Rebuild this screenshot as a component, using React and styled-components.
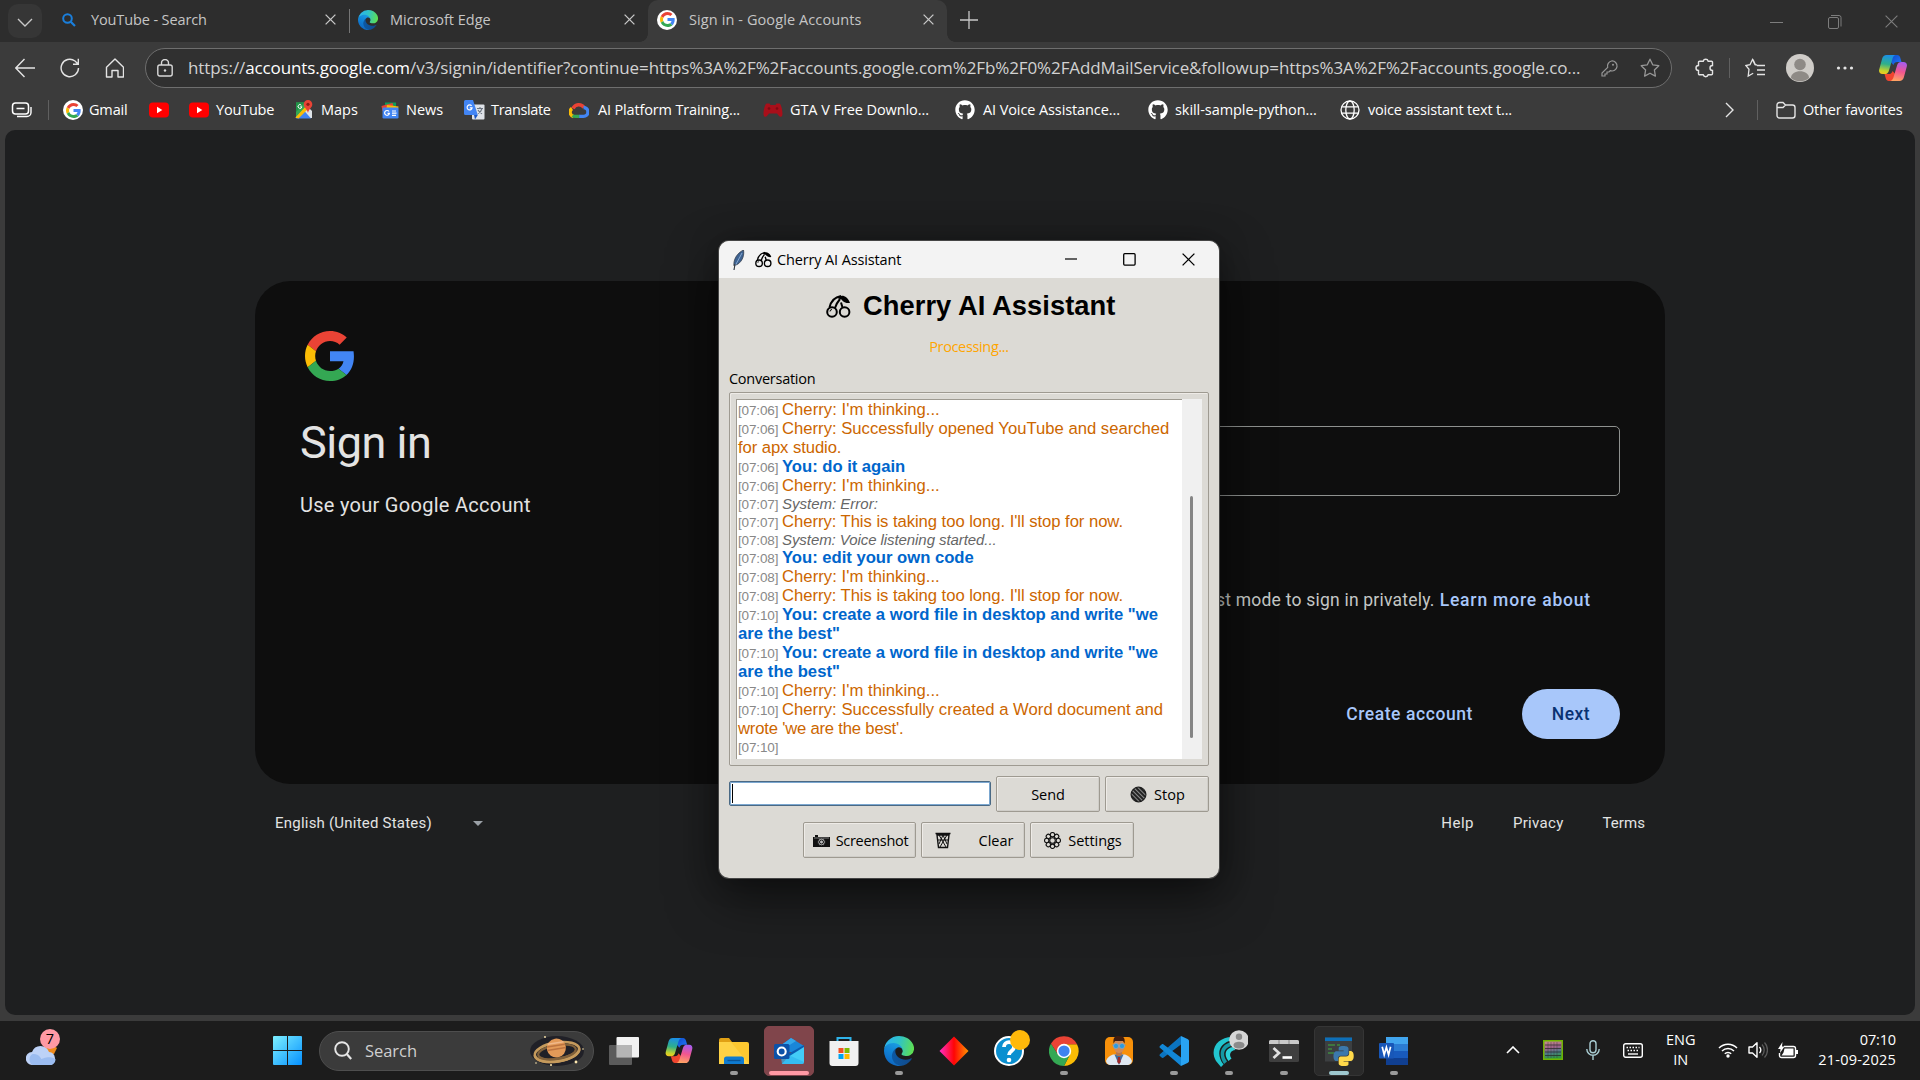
import React from "react";
import styled, { createGlobalStyle, css } from "styled-components";
import { FaGithub } from "react-icons/fa";

const SEGOE = `"Open Sans", "Noto Sans", sans-serif`;
const GOOGLE = `Roboto, "Open Sans", sans-serif`;
const ARIAL = `"Liberation Sans", Arial, sans-serif`;

const Global = createGlobalStyle`
  * { box-sizing: border-box; }
  html, body { margin: 0; padding: 0; background: #1c1c1c; overflow: hidden; }
  svg { display: block; flex: none; }
`;

const Desktop = styled.div`
  position: relative;
  width: 1920px;
  height: 1080px;
  display: flex;
  flex-direction: column;
  overflow: hidden;
  font-family: ${SEGOE};
  background: #3b3b3b;
`;

const TextSpan = styled.span`
  white-space: pre;
  font-size: ${(p) => p.$size || 14.5}px;
  letter-spacing: ${(p) => p.$ls || 0}px;
  color: ${(p) => p.$color || "inherit"};
  font-weight: ${(p) => p.$weight || "inherit"};
  line-height: 20px;
`;
const T = ({ s, ls, c, wt, children }) => (
  <TextSpan $size={s} $ls={ls} $color={c} $weight={wt}>{children}</TextSpan>
);

/* ---------- icons ---------- */
const I = ({ w = 20, h, vb, children }) => (
  <svg width={w} height={h || w} viewBox={vb || `0 0 ${w} ${h || w}`} fill="none">{children}</svg>
);
const GLogo = ({ size }) => (
  <I w={size} vb="0 0 48 48">
    <path fill="#EA4335" d="M24 9.5c3.54 0 6.71 1.22 9.21 3.6l6.85-6.85C35.9 2.38 30.47 0 24 0 14.62 0 6.51 5.38 2.56 13.22l7.98 6.19C12.43 13.72 17.74 9.5 24 9.5z" />
    <path fill="#4285F4" d="M46.98 24.55c0-1.57-.15-3.09-.38-5.2H24v9.67h12.94c-.58 2.96-2.26 5.48-4.78 7.18l7.73 6c4.51-4.18 7.09-10.36 7.09-17.65z" />
    <path fill="#FBBC05" d="M10.53 28.59c-.48-1.45-.76-2.99-.76-4.59s.27-3.14.76-4.59l-7.98-6.19C.92 16.46 0 20.12 0 24c0 3.88.92 7.54 2.56 10.78l7.97-6.19z" />
    <path fill="#34A853" d="M24 48c6.48 0 11.93-2.13 15.89-5.81l-7.73-6c-2.15 1.45-4.92 2.3-8.16 2.3-6.26 0-11.57-4.22-13.47-9.91l-7.98 6.19C6.51 42.62 14.62 48 24 48z" />
  </I>
);
const GBadge = styled.span`
  width: 20px; height: 20px; border-radius: 50%; background: #fff; flex: none;
  display: flex; align-items: center; justify-content: center;
`;
const GoogleFav = () => <GBadge><GLogo size={15} /></GBadge>;
const EdgeIcon = ({ size, id }) => (
  <I w={size} vb="0 0 256 256">
    <defs>
      <linearGradient id={id + "a"} x1="60" y1="180" x2="235" y2="180" gradientUnits="userSpaceOnUse"><stop stopColor="#0c59a4" /><stop offset="1" stopColor="#114a8b" /></linearGradient>
      <linearGradient id={id + "b"} x1="140" y1="70" x2="60" y2="230" gradientUnits="userSpaceOnUse"><stop stopColor="#1b9de2" /><stop offset=".5" stopColor="#1183d6" /><stop offset="1" stopColor="#0f6bc4" /></linearGradient>
      <linearGradient id={id + "c"} x1="10" y1="60" x2="250" y2="120" gradientUnits="userSpaceOnUse"><stop stopColor="#2bb3ee" /><stop offset=".45" stopColor="#2fc2c9" /><stop offset="1" stopColor="#5fe04f" /></linearGradient>
    </defs>
    <path fill={`url(#${id}a)`} d="M231 190.5c-3.4 1.8-6.9 3.4-10.5 4.7a101.5 101.5 0 0 1-35.9 6.5c-47.3 0-88.5-32.5-88.5-74.3a31.5 31.5 0 0 1 16.4-27.3c-42.8 1.8-53.8 46.4-53.8 72.5 0 73.9 68.1 81.4 82.8 81.4 7.9 0 19.8-2.3 27-4.6l1.3-.4a128.3 128.3 0 0 0 66.6-52.8 4 4 0 0 0-5.4-5.7z" />
    <path fill={`url(#${id}b)`} d="M105.7 241.4a79.2 79.2 0 0 1-22.7-21.3 80.7 80.7 0 0 1 29.5-120c3.2-1.5 8.5-4.1 15.6-4a32.4 32.4 0 0 1 25.7 13 31.9 31.9 0 0 1 6.3 18.7c0-.2 24.5-79.6-80-79.6-43.9 0-80 41.7-80 78.2a130.2 130.2 0 0 0 12.1 56 128 128 0 0 0 156.4 67 75.5 75.5 0 0 1-62.8-8z" />
    <path fill={`url(#${id}c)`} d="M152.3 148.9c-.8 1-3.3 2.5-3.3 5.7 0 2.6 1.7 5.2 4.8 7.3 14.4 10.1 41.7 8.7 41.8 8.7a60 60 0 0 0 30.5-8.3 61.8 61.8 0 0 0 30.4-53.1c.3-22.4-8-37.3-11.3-44C223.5 23.6 177.7 0 128 0A128 128 0 0 0 0 126.2c.5-36.5 36.8-66 80-66 3.5 0 23.5.3 42 10.1 16.3 8.6 24.9 18.9 30.8 29.1 6.2 10.7 7.3 24.1 7.3 29.5s-2.7 13.3-7.8 20z" />
  </I>
);
const CopilotIcon = ({ id, w = 28, h = 26 }) => (
  <I w={w} h={h} vb="0 0 28 26">
    <defs>
      <linearGradient id={id + "a"} x1="8" y1="0" x2="5" y2="20" gradientUnits="userSpaceOnUse"><stop stopColor="#1b8fe8" /><stop offset=".45" stopColor="#2fb08a" /><stop offset=".8" stopColor="#c9d32a" /><stop offset="1" stopColor="#ffc21c" /></linearGradient>
      <linearGradient id={id + "b"} x1="22" y1="7" x2="18" y2="26" gradientUnits="userSpaceOnUse"><stop stopColor="#a45cf0" /><stop offset=".5" stopColor="#f2568f" /><stop offset="1" stopColor="#ffa463" /></linearGradient>
      <linearGradient id={id + "c"} x1="14" y1="0" x2="21" y2="7" gradientUnits="userSpaceOnUse"><stop stopColor="#0f4fd0" /><stop offset="1" stopColor="#1f6ff0" /></linearGradient>
    </defs>
    <path fill={`url(#${id}c)`} d="M11 0h7.2c1.500 0 2.500 1 3 2.500L22.500 7h-4.200c-2 0-3.300 1.200-3.900 3.100L11 6z" />
    <path fill="#f0452f" d="M17 26H9.800c-1.500 0-2.500-1-3-2.500L5.500 19h4.200c2 0 3.300-1.200 3.900-3.100L17 20z" />
    <path fill={`url(#${id}a)`} d="M7.500 0h9.200c-1.800.4-2.700 1.900-3.300 3.900l-3.600 12C9.200 18 7.900 19 5.800 19H3.500C.8 19-.4 17 .2 14.500L3.200 3.500C3.900 1.200 5.300 0 7.500 0z" />
    <path fill={`url(#${id}b)`} d="M20.500 26h-9.200c1.800-.4 2.700-1.900 3.300-3.900l3.600-12C18.800 8 20.100 7 22.200 7h2.300c2.700 0 3.900 2 3.300 4.500l-3 11C24.100 24.800 22.700 26 20.500 26z" />
  </I>
);
const CloseX = ({ s = 11, c = "#c8c8c8", sw = 1.3 }) => <I w={s}><path d={`M.6 .6L${s - .6} ${s - .6}M${s - .6} .6L.6 ${s - .6}`} stroke={c} strokeWidth={sw} /></I>;
const YT = () => <I w={20} h={20}><rect y="2.500" width="20" height="15" rx="4" fill="#f00" /><path d="M8 6.800v6.400l5.300-3.200z" fill="#fff" /></I>;
const MapsIcon = () => (
  <I w={20}><path d="M2 2.500h12v15H2z" fill="#34a853" /><path d="M2 2.500h9L2 12z" fill="#1f9347" /><path d="M1.500 18L13 6l5 5v7z" fill="#dfe4e8" /><path d="M2 18.500h15l-7-8z" fill="#4285f4" /><path d="M1.500 17.500L13 5l2.500 2.500L4.500 18.500z" fill="#fbbc05" />
    <path d="M14 0a4.300 4.300 0 0 0-4.300 4.300C9.700 7.500 13 9 14 13c1-4 4.300-5.500 4.300-8.700A4.300 4.300 0 0 0 14 0z" fill="#ea4335" /><circle cx="14" cy="4.300" r="1.600" fill="#8c1d14" /><path d="M7.400 5.300a1.900 1.900 0 1 0 .4 1.500H6.200" stroke="#fff" strokeWidth="1" /></I>
);
const NewsIcon = () => (
  <I w={20}><path d="M5 2.500h11v6H5z" fill="#0f9d58" /><path d="M1.500 6l11-3 1.500 5L2.500 11z" fill="#ea4335" /><path d="M7 5l11.500 1.500-1 6L6 11z" fill="#fbbc04" /><rect x="2.500" y="7.500" width="16" height="11" rx="1.200" fill="#4285f4" />
    <path d="M9 11.500a2.400 2.400 0 1 0 .4 1.800H7.500M12 11h4M12 13.200h4.500M12 15.400h4" stroke="#fff" strokeWidth="1.200" /></I>
);
const TranslateIcon = () => (
  <I w={21} h={20}><rect x="8" y="4.500" width="12.500" height="15" rx="1" fill="#dfe3e8" /><path d="M1.500 0H9l4.800 15H1.500A1.500 1.500 0 0 1 0 13.500v-12A1.500 1.500 0 0 1 1.500 0z" fill="#4285f4" /><path d="M10 15h3.800L11 19.500z" fill="#1a56c4" />
    <path d="M7.600 5.900a2.500 2.500 0 1 0 .5 1.900H5.800" stroke="#fff" strokeWidth="1.200" /><path d="M13 8.500h6M16 7v1.500M18 8.500c-.6 2.500-2 4-4 5M14 10c1 2 2.500 3 4 3.800" stroke="#6b7480" strokeWidth="1.100" /></I>
);
const CloudG = () => (
  <I w={20}><path d="M4.500 16.500A4.500 4.500 0 0 1 3 8.500" stroke="#fbbc05" strokeWidth="3.400" /><path d="M4 8.500A6.300 6.300 0 0 1 15 7.500" stroke="#ea4335" strokeWidth="3.600" /><path d="M14.500 7.500a4.400 4.400 0 0 1 0 8.900H10" stroke="#4285f4" strokeWidth="3.400" /><path d="M3.500 15.600c1 .6 2 .8 3 .8h3.800" stroke="#34a853" strokeWidth="3.400" /></I>
);
const PadIcon = () => <I w={20}><path d="M3.500 3.500h3l1 1.500h5l1-1.500h3C18 4 19.500 10 19.500 14c0 3-2.500 3.500-3.500 2L14 13.500H6L4 16C3 17.500.5 17 .5 14c0-4 1.500-10 3-10.500z" fill="#a80f1a" /><circle cx="6" cy="8.500" r="1.300" fill="#7d0a13" /><circle cx="14" cy="8.500" r="1.300" fill="#7d0a13" /></I>;
const Globe = () => <I w={20}><g stroke="#fff" strokeWidth="1.300"><circle cx="10" cy="10" r="9" /><ellipse cx="10" cy="10" rx="4.200" ry="9" /><path d="M1.700 6.800h16.600M1.700 13.200h16.600" /></g></I>;
const CherryIcon = ({ w = 17 }) => (
  <I w={w} vb="0 0 25 23"><g stroke="#000" strokeWidth="2"><circle cx="6" cy="17" r="4.800" /><circle cx="18.600" cy="17" r="4.800" /><path d="M3.500 12.500C5 6 9 2 15 1M9 13c1-3.500 2.500-6 5-9M16.500 12.500l-1.500-5" /></g>
    <path d="M11 3C14-.5 21-1 24 8c-3 .5-6.500-.5-8.500-3.500z" fill="#000" /><path d="M4 16.500a2 2 0 0 1 2-2" stroke="#000" strokeWidth="1" /></I>
);

/* ---------- browser: tab strip ---------- */
const TabStrip = styled.div`
  height: 42px; flex: none; display: flex; background: #2d2d2d; padding-left: 8px;
`;
const TabSearch = styled.div`
  width: 34px; height: 34px; margin: 4px 6px 0 0; border-radius: 10px; background: #363636;
  display: flex; align-items: center; justify-content: center; padding-top: 2px;
`;
const Tab = styled.div`
  width: ${(p) => p.$w}px; height: 42px; display: flex; align-items: center; gap: ${(p) => p.$gap || 12}px;
  padding: 0 ${(p) => p.$pr}px 3px ${(p) => p.$pl}px; color: #c5c5c5; position: relative;
  ${(p) => p.$active && css`
    background: #3b3b3b; border-radius: 10px 10px 0 0;
    &::before, &::after { content: ""; position: absolute; bottom: 0; width: 8px; height: 8px; }
    &::before { left: -8px; background: radial-gradient(circle at 0 0, transparent 7.500px, #3b3b3b 8px); }
    &::after { right: -8px; background: radial-gradient(circle at 100% 0, transparent 7.500px, #3b3b3b 8px); }
  `}
`;
const Grow = styled.div`flex: 1;`;
const VLine = styled.div`
  width: 1px; height: ${(p) => p.$h}px; background: ${(p) => p.$c || "#606060"}; flex: none;
  margin: ${(p) => p.$m || 0};
`;
const Caption = styled.div`
  width: 150px; display: flex; justify-content: space-between; align-items: center; padding: 1px 22px 0 0;
`;

/* ---------- browser: toolbar ---------- */
const Toolbar = styled.div`
  height: 50px; flex: none; display: flex; align-items: center; padding: 2px 13px 0 15px;
`;
const NavButtons = styled.div`display: flex; align-items: center; width: 130px; gap: 25px;`;
const UrlField = styled.div`
  width: 1527px; height: 40px; border: 1px solid #6e6e6e; border-radius: 20px; background: #303030;
  display: flex; align-items: center; padding: 0 11px 0 11px; color: #d2d2d2; flex: none;
  b { font-weight: 400; color: #fff; }
`;
const UrlText = styled.div`margin-left: 15px; width: 1413px; display: flex; align-items: center;`;
const ToolIcons = styled.div`display: flex; align-items: center; flex: 1; justify-content: flex-end;`;
const Avatar = styled.div`margin: 0 22px 0 21px;`;

/* ---------- browser: favourites ---------- */
const Favs = styled.div`
  height: 38px; flex: none; display: flex; align-items: center; padding: 0 18px 2px 11px; color: #fff;
`;
const Fav = styled.div`
  width: ${(p) => p.$w}px; display: flex; align-items: center; gap: ${(p) => p.$gap || 7}px; flex: none;
`;

/* ---------- page ---------- */
const Page = styled.div`
  height: 885px; margin: 0 5px; border-radius: 10px; background: #1e1f20; padding: 151px 250px 0;
  font-family: ${GOOGLE}; color: #e3e3e3; flex: none;
`;
const Card = styled.div`
  height: 503px; background: #0e0e0e; border-radius: 35px; display: flex; padding: 50px 45px 45px;
`;
const Col = styled.div`width: 660px; display: flex; flex-direction: column;`;
const Brand = styled.div`margin-left: 5px; height: 81px;`;
const Title = styled.div`height: 61px; display: flex; align-items: center;`;
const Sub = styled.div`margin-top: 22px;`;
const Field = styled.div`height: 70px; margin-top: 95px; border: 1px solid #8e918f; border-radius: 5px;`;
const Guest = styled.div`display: flex; justify-content: flex-end; gap: 5px; margin-top: 94px; padding-right: 29px; color: #c4c7c5;`;
const Actions = styled.div`display: flex; justify-content: flex-end; align-items: center; margin-top: auto; gap: 49px; color: #a8c7fa;`;
const NextButton = styled.div`
  width: 98px; height: 50px; border-radius: 25px; background: #a8c7fa; color: #0a3272;
  display: flex; align-items: center; justify-content: center;
`;
const Footer = styled.div`display: flex; align-items: center; padding: 29px 20px 0 20px; gap: 39px;`;

/* ---------- assistant window ---------- */
const Window = styled.div`
  position: absolute; left: 719px; top: 241px; width: 500px; height: 637px; border-radius: 10px;
  background: #dcdad5; overflow: hidden; display: flex; flex-direction: column; color: #000;
`;
const Shadow = styled.div`
  position: absolute; left: 719px; top: 241px; width: 500px; height: 637px; border-radius: 10px;
  box-shadow: 0 0 0 1px #454545, 0 20px 50px rgba(0, 0, 0, .5), 0 0 30px rgba(0, 0, 0, .25);
`;
const TitleBar = styled.div`
  height: 37px; flex: none; background: #f3f3f3; display: flex; align-items: center; padding: 0 24px 0 12px;
`;
const TitleText = styled.div`display: flex; margin-left: 5px;`;
const TitleIcon = styled.div`margin-left: 10px;`;
const TitleControls = styled.div`display: flex; margin-left: auto; gap: 46px; align-items: center; padding-bottom: 1px;`;
const Body = styled.div`padding: 0 10px; display: flex; flex-direction: column;`;
const Heading = styled.h1`
  margin: 13px 0 0; height: 30px; padding-left: 97px; display: flex; align-items: center; gap: 12px;
  font-family: ${ARIAL};
`;
const Status = styled.div`height: 20px; margin-top: 16px; display: flex; justify-content: center;`;
const Label = styled.div`height: 20px; margin-top: 12px; margin-bottom: 3px; display: flex;`;
const Frame = styled.div`
  height: 374px; border: 1px solid #9e9a91; border-radius: 2px; box-shadow: inset 1px 1px 0 #eeebe7;
  padding: 6px; display: flex;
`;
const Log = styled.div`
  width: 446px; height: 360px; background: #fff; border-left: 1px solid #9e9a91; border-top: 1px solid #9e9a91;
  padding: 0 0 0 1px; font-family: ${ARIAL};
`;
const Track = styled.div`width: 20px; height: 360px; background: #f0f0f0; padding: 97px 0 0 8px;`;
const Thumb = styled.div`width: 3px; height: 242px; border-radius: 2px; background: #858585;`;
const KIND = {
  cherry: { size: 16.67, color: "#cc6600", h: 19 },
  you: { size: 16.67, color: "#0066cc", h: 19, weight: 700 },
  system: { size: 15, color: "#666666", h: 17, italic: true },
};
const Line = styled.div`
  height: ${(p) => p.$k.h}px; line-height: ${(p) => p.$k.h}px; white-space: pre; display: flex; align-items: baseline;
  font-size: ${(p) => p.$k.size}px; color: ${(p) => p.$k.color}; font-weight: ${(p) => p.$k.weight || 400};
  font-style: ${(p) => (p.$k.italic ? "italic" : "normal")}; letter-spacing: ${(p) => p.$ls || 0}px;
`;
const Stamp = styled.span`
  width: 44px; font-size: 13.500px; color: #888; font-weight: 400; font-style: normal; letter-spacing: -.15px;
`;
const Row = styled.div`
  display: flex; align-items: center; gap: 5px; margin-top: 10px;
  ${(p) => p.$center && css`justify-content: center; padding-right: 1px;`}
`;
const Entry = styled.div`
  width: 262px; height: 25px; border: 1px solid #4a6984; border-radius: 2px; background: #fff; padding: 1px 2px;
  box-shadow: inset 0 0 0 1px #7ba7d0; display: flex; align-items: center; margin-top: -1px;
`;
const Caret = styled.div`width: 1px; height: 19px; background: #000;`;
const Button = styled.div`
  width: ${(p) => p.$w}px; height: 36px; border: 1px solid #9e9a91; border-radius: 2px;
  box-shadow: inset 1px 1px 0 #eeebe7, inset -1px -1px 0 #cfcdc8; padding: 1px 0 0 ${(p) => p.$pl || 0}px;
  display: flex; align-items: center; justify-content: center; gap: ${(p) => p.$gap || 7}px;
`;

/* ---------- taskbar ---------- */
const Taskbar = styled.div`
  margin-top: 6px; height: 59px; flex: none; background: #1c1c1c; display: flex; align-items: center; color: #fff;
`;
const Weather = styled.div`width: 273px; padding: 3px 0 0 26px; height: 59px; position: relative; display: flex; align-items: center;`;
const Badge = styled.div`
  position: absolute; left: 40px; top: 8px; width: 20px; height: 20px; border-radius: 50%; background: #ff99a4;
  color: #000; display: flex; align-items: center; justify-content: center;
`;
const SearchPill = styled.div`
  width: 275px; height: 40px; margin: 0 2px 0 17px; border-radius: 20px; background: #3b3b3b; border: 1px solid #4e4e4e;
  display: flex; align-items: center; padding: 0 8px 0 14px; color: #cfcfcf; gap: 13px;
`;
const Slot = styled.div`
  width: 55px; height: 59px; flex: none; display: flex; flex-direction: column; align-items: center; justify-content: center;
  position: relative;
`;
const Tile = styled.div`
  width: 50px; height: 50px; border-radius: 5px; background: ${(p) => p.$bg}; border: 1px solid ${(p) => p.$bd};
  display: flex; align-items: center; justify-content: center;
`;
const Mark = styled.div`
  position: absolute; bottom: 5px; width: ${(p) => p.$w || 8}px; height: 4px; border-radius: 2px; background: ${(p) => p.$c || "#9a9a9a"};
`;
const Tray = styled.div`flex: 1; display: flex; align-items: center; height: 59px; padding: 0 24px 1px 1px;`;
const TrayItem = styled.div`width: ${(p) => p.$w}px; display: flex; flex: none;`;
const Stack = styled.div`display: flex; flex-direction: column; align-items: ${(p) => p.$a};`;

/* slot width, icon, label, letter spacing, icon gap */
const favs = [
  [86, <GoogleFav />, "Gmail", -0.17, 6], [40, <YT />], [105, <YT />, "YouTube", -0.2], [86, <MapsIcon />, "Maps", 0],
  [84, <NewsIcon />, "News", 0, 6], [105, <TranslateIcon />, "Translate", -0.36, 6], [194, <CloudG />, "AI Platform Training...", -0.16, 9],
  [192, <PadIcon />, "GTA V Free Downlo...", -0.08], [193, <FaGithub size={20} />, "AI Voice Assistance...", -0.1, 8],
  [192, <FaGithub size={20} />, "skill-sample-python...", -0.06], [385, <Globe />, "voice assistant text t...", -0.18, 8],
];
/* kind, time, text, letter spacing */
const log = [
  ["cherry", "07:06", "Cherry: I'm thinking...", .04], ["cherry", "07:06", "Cherry: Successfully opened YouTube and searched", 0], ["cherry", "", "for apx studio.", -.08],
  ["you", "07:06", "You: do it again", -.03], ["cherry", "07:06", "Cherry: I'm thinking...", .04], ["system", "07:07", "System: Error:", 0],
  ["cherry", "07:07", "Cherry: This is taking too long. I'll stop for now.", -.05], ["system", "07:08", "System: Voice listening started...", -.07],
  ["you", "07:08", "You: edit your own code", -.02], ["cherry", "07:08", "Cherry: I'm thinking...", .04], ["cherry", "07:08", "Cherry: This is taking too long. I'll stop for now.", -.05],
  ["you", "07:10", "You: create a word file in desktop and write \"we", -.02], ["you", "", "are the best\"", .05],
  ["you", "07:10", "You: create a word file in desktop and write \"we", -.02], ["you", "", "are the best\"", .05],
  ["cherry", "07:10", "Cherry: I'm thinking...", .04], ["cherry", "07:10", "Cherry: Successfully created a Word document and", .02], ["cherry", "", "wrote 'we are the best'.", -.2], ["cherry", "07:10", ""],
];

const PY = "M14.25.18l.9.2.73.26.59.3.45.32.34.34.25.34.16.33.1.3.04.26.02.2-.01.13V8.5l-.05.63-.13.55-.21.46-.26.38-.3.31-.33.25-.35.19-.35.14-.33.1-.3.07-.26.04-.21.02H8.77l-.69.05-.59.14-.5.22-.41.27-.33.32-.27.35-.2.36-.15.37-.1.35-.07.32-.04.27-.02.21v3.06H3.17l-.21-.03-.28-.07-.32-.12-.35-.18-.36-.26-.36-.36-.35-.46-.32-.59-.28-.73-.21-.88-.14-1.05-.05-1.23.06-1.22.16-1.04.24-.87.32-.71.36-.57.4-.44.42-.33.42-.24.4-.16.36-.1.32-.05.24-.01h.16l.06.01h8.16v-.83H6.18l-.01-2.75-.02-.37.05-.34.11-.31.17-.28.25-.26.31-.23.38-.2.44-.18.51-.15.58-.12.64-.1.71-.06.77-.04.84-.02 1.27.05z";

const Explorer = () => <I w={30} h={28}><path d="M0 3a2 2 0 0 1 2-2h8l3 4h-13z" fill="#e0a014" /><path d="M0 5h28a2 2 0 0 1 2 2v20H0z" fill="#fdc830" /><path d="M0 5l12 0 18 22H0z" fill="#ffdb5a" opacity=".5" /><path d="M5 27v-5a2.500 2.500 0 0 1 2.500-2.500h15A2.500 2.500 0 0 1 25 22v5z" fill="#0f7bd0" /><path d="M8.500 23.500h13" stroke="#0a5496" strokeWidth="1.300" /></I>;
const Outlook = () => <I w={30} h={28}><path d="M6 9L17 1l13 8v6H6z" fill="#1a86d9" /><path d="M13 4l4-3 5 3-16 10V9z" fill="#35a6ea" /><path d="M14 17L30 8v6L16 22z" fill="#0b5cb0" /><path d="M8 27h20a2 2 0 0 0 2-2V10L14 20z" fill="#43cdf7" /><path d="M6 14l24 11a2 2 0 0 1-2 2H8z" fill="#2fb5ee" opacity=".7" /><rect y="7" width="15.500" height="15" rx="1.500" fill="#0c52a8" /><circle cx="7.700" cy="14.500" r="4" stroke="#fff" strokeWidth="2.100" /></I>;
const Store = () => <I w={30}><path d="M8.500 6V2h13v4" stroke="#2fb3ea" strokeWidth="2" /><path d="M.5 5h29v22a3 3 0 0 1-3 3h-23a3 3 0 0 1-3-3z" fill="#f0f0f0" /><path fill="#f25022" d="M9.500 12h5v5h-5z" /><path fill="#7fba00" d="M15.500 12h5v5h-5z" /><path fill="#00a4ef" d="M9.500 18h5v5h-5z" /><path fill="#ffb900" d="M15.500 18h5v5h-5z" /></I>;
const Diamond = () => <I w={30}><defs><linearGradient id="dm" x1="0" y1="0" x2="30" y2="0" gradientUnits="userSpaceOnUse"><stop stopColor="#ff2fd0" /><stop offset=".5" stopColor="#ff0505" /><stop offset="1" stopColor="#ff9a00" /></linearGradient></defs><path d="M15 .5L29.500 15 15 29.500.5 15z" fill="url(#dm)" /></I>;
const HelpIcon = () => <I w={42} h={42} vb="-6 -6 42 42"><circle cx="15" cy="15" r="14" fill="#0b8fd0" stroke="#fff" strokeWidth="2" /><path d="M10 11c0-6.500 10-6.500 10 0 0 4-5 4-5 8" stroke="#fff" strokeWidth="3.800" /><circle cx="15" cy="24" r="2.300" fill="#fff" /><circle cx="26" cy="4" r="10" fill="#ffb90a" /></I>;
const Chrome = () => <I w={30} vb="0 0 48 48"><path d="M24 13h20.800A24 24 0 0 1 24 48l9.500-18.500z" fill="#fbbc05" /><path d="M14.500 29.500L3.200 12A24 24 0 0 0 24 48l9.500-18.500z" fill="#34a853" /><path d="M3.200 12A24 24 0 0 1 44.800 13H24l-9.500 16.500z" fill="#ea4335" /><circle cx="24" cy="24" r="11.500" fill="#fff" /><circle cx="24" cy="24" r="9" fill="#3f83f0" /></I>;
const Man = () => <I w={28} h={29}><rect y="1" width="28" height="28" rx="5" fill="#f7900a" /><path d="M1 25c1.500-4 4-5.500 7-6.500h12c3 1 5.500 2.500 7 6.500a5 5 0 0 1-4 4H5a5 5 0 0 1-4-4z" fill="#dfe8f1" /><path d="M9.500 18.500h9L14 29z" fill="#3f6f9f" /><path d="M13 21h2l.8 5-1.800 2-1.800-2z" fill="#a02828" /><rect x="11" y="14" width="6" height="6" rx="2" fill="#b87548" /><rect x="9" y="3.500" width="10" height="13.500" rx="4.800" fill="#d08a58" /><path d="M8.500 7.500C8 1.500 10-.3 14.500.2 18.800-.3 20.300 2 19.500 7.500l-1.500-2.500h-8z" fill="#3f1d10" /><path d="M7.500 8.500h13v1.500h-13z" fill="#7c93a8" /><circle cx="11" cy="10" r="2.600" fill="#2d9be0" stroke="#8fa5b8" strokeWidth=".8" /><circle cx="17" cy="10" r="2.600" fill="#2d9be0" stroke="#8fa5b8" strokeWidth=".8" /></I>;
const VSCode = () => <I w={30}><path d="M22 0v8.500L4.300 21.700c-.5.4-1.200.3-1.700-.1L.9 20c-.5-.5-.5-1.300 0-1.800z" fill="#0b74c0" /><path d="M22 30v-8.500L4.300 8.300c-.5-.4-1.200-.3-1.700.1L.9 10c-.5.500-.5 1.300 0 1.800z" fill="#1287d6" /><path d="M22 0l6.500 3c1 .5 1.500 1.200 1.500 2.200v19.600c0 1-.5 1.700-1.500 2.200L22 30z" fill="#29a3f2" /></I>;
const Swirl = () => <I w={38} h={42} vb="0 -7 38 42"><path d="M22 0C8 0-1 12 6 24l5 6 2.500-2.500C5 16 10 6 22 3z" fill="#22c5cf" /><path d="M22 5C12 7 7 15 14 27l3-2.500C11 16 15 10 23 8.500z" fill="#1597a3" /><path d="M23 10c-7 1-10 7-4.500 14l3-2.500c-3-4-1-8 4-8.500z" fill="#2cd0d8" /><circle cx="29" cy="3" r="9.800" fill="#d6d6d6" /><circle cx="29" cy="-.2" r="3.200" fill="#8a8a8a" /><path d="M23.500 8c0-4.500 11-4.500 11 0 0 2.500-2.500 3.500-5.500 3.500S23.500 10.500 23.500 8z" fill="#8a8a8a" /></I>;
const Terminal = () => <I w={30} h={22}><rect width="30" height="22" rx="1.500" fill="#3f3f3f" /><path d="M0 4V1.500A1.500 1.500 0 0 1 1.500 0h27A1.500 1.500 0 0 1 30 1.500V4z" fill="#c9c9c9" /><path d="M10 0v4M20 0v4" stroke="#777" strokeWidth=".8" /><path d="M4.500 8l5.500 5-5.500 5" stroke="#e0e0e0" strokeWidth="2.700" /><path d="M13.500 17.500h9.500" stroke="#fff" strokeWidth="2.600" /></I>;
const PyIcon = () => <I w={30} h={30}><rect x="1" y="1.500" width="27" height="24" fill="#3c3f41" /><rect x="1" y="1.500" width="27" height="3.500" fill="#0d6fb8" /><path d="M4 9h7M4 13h4M4 17h6M13 9h3" stroke="#3f8a3f" strokeWidth="1.300" /><g transform="translate(9.500 10) scale(.84)"><path d={PY} fill="#3b78ac" /><path d={PY} fill="#ffd94a" transform="rotate(180 12 12)" /></g></I>;
const WordIcon = () => <I w={30} h={28}><path fill="#41a5ee" d="M7 0h22v7H7z" /><path fill="#2b7cd3" d="M7 7h22v7H7z" /><path fill="#185abd" d="M7 14h22v7H7z" /><path fill="#103f91" d="M7 21h22v7H7z" /><rect y="6" width="15" height="15.500" rx="1" fill="#1857b8" /><path d="M3.200 9.800l2 8 2.200-7.600 2.200 7.600 2-8" stroke="#fff" strokeWidth="1.700" /></I>;
const TaskView = () => <I w={30} h={28}><rect x="7.500" y="0" width="22.500" height="20.500" rx="1" fill="#f2f2f2" /><rect x="0" y="8" width="23" height="20" rx="1" fill="#666" opacity=".85" /><path d="M7.500 8H23v12.500H7.500z" fill="#b5b5b5" /></I>;
const Saturn = () => (
  <I w={56} h={32}>
    <ellipse cx="28" cy="16" rx="27" ry="15" fill="#15151f" opacity=".7" />
    <g transform="rotate(-9 28 17)">
      <ellipse cx="28" cy="17" rx="22.500" ry="9.500" stroke="#c59a5c" strokeWidth="2.600" />
      <ellipse cx="28" cy="17" rx="19" ry="7" stroke="#80603a" strokeWidth="2.200" />
      <circle cx="28" cy="13" r="9.500" fill="#e39a58" />
      <path d="M19 10.500h18M18.600 14h18.800" stroke="#bd7440" strokeWidth="1.500" />
      <path d="M20 8h16" stroke="#f0b88a" strokeWidth="1.500" />
      <path d="M9 18.500c4 7 34 7 38 0" stroke="#80603a" strokeWidth="2.200" />
      <path d="M5.500 17c1 12.500 44 12.500 45 0" stroke="#c59a5c" strokeWidth="2.600" />
    </g>
    <g fill="#ffe9b0"><circle cx="47" cy="27" r="1.400" /><circle cx="16" cy="2" r=".9" /><circle cx="22" cy="30" r="1" /><circle cx="7" cy="28" r=".8" /><circle cx="54" cy="14" r=".8" /></g>
  </I>
);

/* icon, running mark width, mark colour, tile colours */
const apps = [
  [<TaskView />], [<CopilotIcon id="c2" w={28} h={25} />], [<Explorer />, 8], [<Outlook />, 40, "#ff99a4", ["#80454b", "#80454b"]], [<Store />], [<EdgeIcon size={30} id="e2" />, 8], [<Diamond />],
  [<HelpIcon />], [<Chrome />, 8], [<Man />], [<VSCode />, 8], [<Swirl />, 8], [<Terminal />, 8], [<PyIcon />, 20, "#9ec8cf", ["#2a2a2a", "#353535"]], [<WordIcon />, 8],
];

export default function App() {
  return (
    <Desktop>
      <Global />
      <TabStrip>
        <TabSearch><I w={16} h={9}><path d="M1 1l7 7 7-7" stroke="#c8c8c8" strokeWidth="1.400" /></I></TabSearch>
        <Tab $w={301} $pl={14} $pr={13} $gap={15}>
          <I w={14} h={14}><circle cx="5.500" cy="5.500" r="4.300" stroke="#1a7fdc" strokeWidth="2" /><path d="M8.700 8.700l4.300 4.300" stroke="#1a7fdc" strokeWidth="2.200" /></I>
          <T ls={-.12}>YouTube - Search</T><Grow /><CloseX />
        </Tab>
        <VLine $h={24} $m="9px 0 0" $c="#757575" />
        <Tab $w={298} $pl={8} $pr={13}><EdgeIcon size={20} id="e1" /><T>Microsoft Edge</T><Grow /><CloseX /></Tab>
        <Tab $w={299} $pl={9} $pr={13} $active $gap={12}><GoogleFav /><T ls={.1}>Sign in - Google Accounts</T><Grow /><CloseX /></Tab>
        <Tab $w={100} $pl={13} $pr={0}><I w={18}><path d="M9 0v18M0 9h18" stroke="#c8c8c8" strokeWidth="1.300" /></I></Tab>
        <Grow />
        <Caption>
          <I w={14}><path d="M0 7.500h13" stroke="#7d7d7d" /></I>
          <I w={14} h={14}><rect x=".5" y="2.500" width="10" height="11" rx="1.500" stroke="#7d7d7d" /><path d="M3 .5h8a2 2 0 0 1 2 2v9" stroke="#7d7d7d" /></I>
          <CloseX s={13} c="#7d7d7d" sw={1.1} />
        </Caption>
      </TabStrip>
      <Toolbar>
        <NavButtons>
          <I w={20}><path d="M20 10H1M9.500 1L.8 10l8.700 9" stroke="#e4e4e4" strokeWidth="1.400" /></I>
          <I w={20}><path d="M18.500 10A8.700 8.700 0 1 1 15 3l3 3M18.300.8V6.200H13" stroke="#e4e4e4" strokeWidth="1.400" /></I>
          <I w={19} h={20}><path d="M1.500 9.200L10 1l8.500 8.200V19H13v-6.500H7V19H1.500z" stroke="#e4e4e4" strokeWidth="1.400" strokeLinejoin="round" /></I>
        </NavButtons>
        <UrlField>
          <I w={16} h={18}><rect x=".8" y="6" width="14.400" height="11" rx="2" stroke="#d8d8d8" strokeWidth="1.400" /><path d="M4.500 6V4a3.500 3.500 0 0 1 7 0v2" stroke="#d8d8d8" strokeWidth="1.400" /><circle cx="8" cy="11.500" r="1.200" fill="#d8d8d8" /></I>
          <UrlText><T ls={-.102} s={17}>https://<b>accounts.google.com</b>/v3/signin/identifier?continue=https%3A%2F%2Faccounts.google.com%2Fb%2F0%2FAddMailService&amp;followup=https%3A%2F%2Faccounts.google.co...</T></UrlText>
          <I w={17} h={17}><path d="M10.500 1a5 5 0 1 1-1.300 9.600L8 12H6v2H4v2H1v-3l5.700-5.700A5 5 0 0 1 10.500 1z" stroke="#979797" strokeWidth="1.200" /><circle cx="12" cy="4.800" r="1" fill="#979797" /></I>
          <Grow />
          <I w={20}><path d="M10 1.200l2.700 5.600 6.100.9-4.400 4.300 1 6.100L10 15.200l-5.400 2.900 1-6.100L1.200 7.700l6.100-.9z" stroke="#979797" strokeWidth="1.300" strokeLinejoin="round" /></I>
        </UrlField>
        <ToolIcons>
          <I w={19} h={20}><path d="M4.500 3.200h3.700a2.600 2.600 0 0 1 5 0h3.300a1 1 0 0 1 1 1v3.300a2.500 2.500 0 0 0 0 5v3.300a1 1 0 0 1-1 1h-3.300a2.600 2.600 0 0 1-5 0H4.500a1 1 0 0 1-1-1v-3.300a2.500 2.500 0 0 1 0-5V4.200a1 1 0 0 1 1-1z" stroke="#e4e4e4" strokeWidth="1.400" /></I>
          <VLine $h={20} $m="0 15px 0 15px" />
          <I w={20}><path d="M12 7L10 6.700 7.500 1.500 5 6.700l-4.200.8 3.200 3.800-.8 6.700 5-2.700M12 7.500h8M12 12h8M12 16.500h8M8 1.500L10.300 6.500" stroke="#e4e4e4" strokeWidth="1.300" /></I>
          <Avatar><I w={28}><circle cx="14" cy="14" r="14" fill="#cfccc8" /><circle cx="14" cy="10.500" r="5.800" fill="#8e8a86" /><path d="M5 24c0-9 18-9 18 0a14 14 0 0 1-18 0z" fill="#8e8a86" /></I></Avatar>
          <I w={43} h={4}><g fill="#e4e4e4"><circle cx="2.500" cy="2" r="1.600" /><circle cx="9" cy="2" r="1.600" /><circle cx="15.500" cy="2" r="1.600" /></g></I>
          <CopilotIcon id="c1" />
        </ToolIcons>
      </Toolbar>
      <Favs>
        <I w={21} h={16}><rect x="1.500" y="1" width="16" height="11" rx="3" stroke="#fff" strokeWidth="1.500" /><path d="M5.500 6.500h8M20 5v5.500a4 4 0 0 1-4 4H6" stroke="#fff" strokeWidth="1.400" /></I>
        <VLine $h={20} $m="0 14px 0 16px" />
        {favs.map(([w, icon, text, ls, gap], i) => <Fav key={i} $w={w} $gap={gap}>{icon}{text && <T ls={ls}>{text}</T>}</Fav>)}
        <I w={10} h={16}><path d="M1 1l7 7-7 7" stroke="#e4e4e4" strokeWidth="1.400" /></I>
        <Grow />
        <VLine $h={20} $m="0 18px 0 0" />
        <Fav $w={126}><I w={20} h={18}><path d="M1 4a2.500 2.500 0 0 1 2.500-2.500H7L9.500 4h7A2.500 2.500 0 0 1 19 6.500v8a2.500 2.500 0 0 1-2.500 2.500h-13A2.500 2.500 0 0 1 1 14.500zM1 6.500h6L9.500 4" stroke="#e4e4e4" strokeWidth="1.400" /></I><T ls={-.16}>Other favorites</T></Fav>
      </Favs>
      <Page>
        <Card>
          <Col>
            <Brand><GLogo size={50} /></Brand>
            <Title><T s={45} ls={-.5}>Sign in</T></Title>
            <Sub><T s={20} ls={.28}>Use your Google Account</T></Sub>
          </Col>
          <Col>
            <Field />
            <Guest><T s={17.5} ls={.22}>Guest mode to sign in privately.</T><T s={17.5} c="#a8c7fa" wt={500} ls={.82}>Learn more about</T></Guest>
            <Actions><T s={17.5} wt={500} ls={.58}>Create account</T><NextButton><T s={17.5} wt={500} ls={.5}>Next</T></NextButton></Actions>
          </Col>
        </Card>
        <Footer>
          <T s={15} ls={.22}>English (United States)</T>
          <I w={12} h={5}><path d="M2 0h10L7 5z" fill="#9aa0a6" /></I>
          <Grow />
          <T s={15} ls={.5}>Help</T><T s={15} ls={.3}>Privacy</T><T s={15} ls={.06}>Terms</T>
        </Footer>
      </Page>
      <Taskbar>
        <Weather>
          <I w={34} h={26} vb="0 -6 34 26"><path d="M23 9h5l3-6-5-4h-9z" fill="#ee8a1c" /><path d="M6.500 20a6.500 6.500 0 0 1-.5-13A9 9 0 0 1 23 7a6.700 6.700 0 0 1 1.500 13z" fill="#bdd2f7" /><path d="M6.500 20a6.500 6.500 0 0 1 0-11c6-1 9 5 9 5s8-4 14 0c0 4-3 6-5 6z" fill="#9bbcf0" /></I>
          <Badge><T>7</T></Badge>
        </Weather>
        <I w={29}><defs><linearGradient id="wn" x1="0" y1="0" x2="29" y2="29" gradientUnits="userSpaceOnUse"><stop stopColor="#7df0ff" /><stop offset="1" stopColor="#0590ff" /></linearGradient></defs><path fill="url(#wn)" d="M0 1a1 1 0 0 1 1-1h13v14H0zM15 0h13a1 1 0 0 1 1 1v13H15zM0 15h14v14H1a1 1 0 0 1-1-1zM15 15h14v13a1 1 0 0 1-1 1H15z" /></I>
        <SearchPill>
          <I w={18} h={19}><circle cx="8" cy="8" r="6.800" stroke="#e6e6e6" strokeWidth="1.900" /><path d="M12.800 13l4.400 5" stroke="#e6e6e6" strokeWidth="2.200" /></I>
          <T s={16.5} ls={-.05}>Search</T><Grow />
          <Saturn />
        </SearchPill>
        {apps.map(([icon, mark, color, tile], i) => (
          <Slot key={i}>{tile ? <Tile $bg={tile[0]} $bd={tile[1]}>{icon}</Tile> : icon}{mark && <Mark $w={mark} $c={color} />}</Slot>
        ))}
        <Tray>
          <TrayItem $w={84} />
          <TrayItem $w={37}><I w={14} h={8}><path d="M1 7l6-6 6 6" stroke="#fff" strokeWidth="1.600" /></I></TrayItem>
          <TrayItem $w={43}><I w={20}><defs><linearGradient id="mz" x1="0" y1="0" x2="4" y2="20" gradientUnits="userSpaceOnUse"><stop stopColor="#d09a8c" /><stop offset=".45" stopColor="#a0628a" /><stop offset=".7" stopColor="#4c7a8a" /><stop offset="1" stopColor="#2f9a3f" /></linearGradient></defs><rect x=".75" y=".75" width="18.500" height="18.500" fill="url(#mz)" stroke="#6fb400" strokeWidth="1.500" /><path d="M2 5h16M2 8.500h16M2 12h16M2 15.500h16" stroke="#222" strokeWidth=".7" /><path d="M5 2v16M8 2v16M11 2v16M14 2v16" stroke="#333" strokeWidth=".4" /></I></TrayItem>
          <TrayItem $w={37}><I w={14} h={20}><rect x="4" y=".7" width="6" height="12" rx="3" stroke="#a9cdd3" strokeWidth="1.400" /><path d="M.8 9a6.200 6.200 0 0 0 12.400 0M7 15.500V20" stroke="#a9cdd3" strokeWidth="1.400" /></I></TrayItem>
          <TrayItem $w={43}><I w={20} h={15}><rect x=".7" y=".7" width="18.600" height="13.600" rx="2" stroke="#fff" strokeWidth="1.400" /><path d="M3.500 4.500h13M4.500 7.500h11" stroke="#fff" strokeWidth="1.500" strokeDasharray="1.500 1.500" /><path d="M5 11h10" stroke="#fff" strokeWidth="1.400" /></I></TrayItem>
          <TrayItem $w={52}><Stack $a="center"><T>ENG</T><T>IN</T></Stack></TrayItem>
          <TrayItem $w={30}><I w={20} h={16}><g stroke="#fff" strokeWidth="1.500"><path d="M1 6a12.700 12.700 0 0 1 18 0M4 9a8.500 8.500 0 0 1 12 0M6.800 11.800a4.500 4.500 0 0 1 6.400 0" /></g><circle cx="10" cy="14" r="1.700" fill="#fff" /></I></TrayItem>
          <TrayItem $w={30}><I w={20} h={18}><path d="M1 6h3.500L9 1.800v14.400L4.500 12H1z" stroke="#fff" strokeWidth="1.400" strokeLinejoin="round" /><path d="M11.500 6a4.500 4.500 0 0 1 0 6" stroke="#fff" strokeWidth="1.300" /><path d="M14 3.500a8 8 0 0 1 0 11M16.500 1.500a11 11 0 0 1 0 15" stroke="#5a5a5a" strokeWidth="1.300" /></I></TrayItem>
          <TrayItem $w={20}><I w={21} h={17}><path d="M6 4.500h9.500a2 2 0 0 1 2 2v7a2 2 0 0 1-2 2h-12a2 2 0 0 1-2-2V11" stroke="#fff" strokeWidth="1.400" /><path d="M18 8h2v4h-2z" fill="#fff" /><path d="M6.500 6.500h9v7H3.500l2-3z" fill="#fff" /><path d="M4.500 0L0 7h2.500L2 11l4.500-6.500H4z" fill="#fff" /></I></TrayItem>
          <Grow />
          <Stack $a="flex-end"><T ls={-.15}>07:10</T><T ls={.2}>21-09-2025</T></Stack>
        </Tray>
      </Taskbar>
      <Shadow />
      <Window>
        <TitleBar>
          <I w={14} h={20}><path d="M12.500 0c1 5-1 11-5.500 14L3 16C2 10 6 3 12.500 0z" fill="#3d6291" stroke="#2b3440" strokeWidth=".7" /><path d="M11 3L3.500 17 3 20" stroke="#8fb0d8" strokeWidth=".9" /><path d="M4 14l-1 6" stroke="#333" strokeWidth="1" /></I>
          <TitleIcon><CherryIcon w={17} /></TitleIcon>
          <TitleText><T ls={-.14}>Cherry AI Assistant</T></TitleText>
          <TitleControls><I w={12}><path d="M0 6h12" stroke="#000" strokeWidth="1.200" /></I><I w={13}><rect x=".7" y=".7" width="11.400" height="11.400" rx="1" stroke="#000" strokeWidth="1.300" /></I><CloseX s={13} c="#000" /></TitleControls>
        </TitleBar>
        <Body>
          <Heading><CherryIcon w={25} /><T s={27.3} ls={.06}>Cherry AI Assistant</T></Heading>
          <Status><T c="#ffa500" ls={-.35}>Processing...</T></Status>
          <Label><T ls={-.26}>Conversation</T></Label>
          <Frame>
            <Log>
              {log.map(([k, t, m, ls], i) => <Line key={i} $k={KIND[k]} $ls={ls}>{t && <Stamp>[{t}]</Stamp>}<span>{m}</span></Line>)}
            </Log>
            <Track><Thumb /></Track>
          </Frame>
          <Row><Entry><Caret /></Entry><Button $w={104}><T ls={-.1}>Send</T></Button>
            <Button $w={104} $pl={1}><I w={17}><defs><pattern id="ht" width="3" height="3" patternUnits="userSpaceOnUse" patternTransform="rotate(-45)"><rect width="3" height="3" fill="#222" /><path d="M1.500 0v3" stroke="#999" strokeWidth=".9" /></pattern></defs><circle cx="8.500" cy="8.500" r="7.500" fill="url(#ht)" stroke="#111" /></I><T ls={.1}>Stop</T></Button></Row>
          <Row $center>
            <Button $w={113} $pl={2} $gap={6}><I w={17} h={13}><path d="M0 3h17v10H0zM2 1h3v2H2z" fill="#111" /><circle cx="8.500" cy="8" r="3.800" fill="#bbb" stroke="#111" /><circle cx="8.500" cy="8" r="2" stroke="#111" /><path d="M1 4h15" stroke="#999" strokeWidth=".8" /></I><T ls={-.3}>Screenshot</T></Button>
            <Button $w={104} $pl={2} $gap={28}><I w={16} h={17}><path d="M.5 1.500h15M2 3l1.500 12.500h9L14 3z" stroke="#111" strokeWidth="1.400" /><path d="M4 3l7 12M8 3l4 9M12 3L5 15M8 3l-4 9M3 8h10" stroke="#111" strokeWidth="1" /></I><T>Clear</T></Button>
            <Button $w={104} $pl={2}><I w={17}><g stroke="#111" strokeWidth="1.100"><circle cx="8.500" cy="8.500" r="2.800" />{[0, 45, 90, 135, 180, 225, 270, 315].map((a) => <circle key={a} cx="8.500" cy="2.700" r="2.200" transform={`rotate(${a} 8.500 8.500)`} />)}</g></I><T ls={-.05}>Settings</T></Button>
          </Row>
        </Body>
      </Window>
    </Desktop>
  );
}
